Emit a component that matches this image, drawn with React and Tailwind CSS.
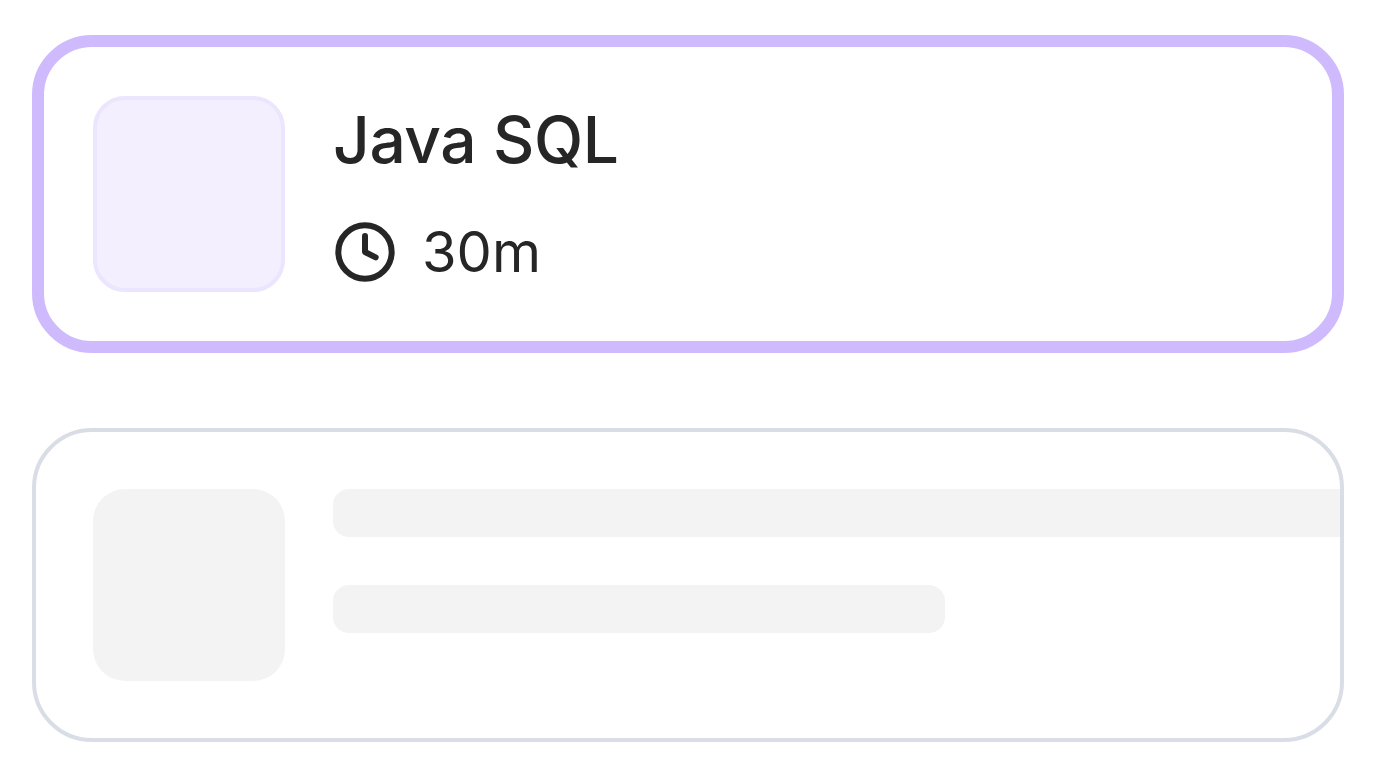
import { Clock } from "lucide-react";

function App() {
  return (
    <div className="min-h-screen bg-white px-8 pt-[35px] font-['Inter',sans-serif] text-[#262626]">
      <div className="flex items-start gap-12 rounded-[60px] border-[12px] border-[#cfbafd] bg-white p-[49px]">
        <div className="h-[196px] w-[192px] shrink-0 rounded-[32px] border-4 border-[#ebe5fe] bg-[#f4effe]" />
        <div className="flex flex-col">
          <h2 className="text-[64px] leading-[88px] font-medium tracking-[-0.4px]">Java SQL</h2>
          <div className="mt-9 flex items-center gap-[25px]">
            <Clock size={64} strokeWidth={2.25} />
            <span className="text-[56px] leading-[64px]">30m</span>
          </div>
        </div>
      </div>

      <div className="mt-[75px] flex items-start gap-12 overflow-hidden rounded-[60px] border-4 border-[#d9dee6] bg-white py-[57px] pl-[57px]">
        <div className="h-[192px] w-[192px] shrink-0 rounded-[32px] bg-[#f3f3f3]" />
        <div className="flex flex-col gap-12">
          <div className="h-12 w-[1100px] rounded-2xl bg-[#f3f3f3]" />
          <div className="h-12 w-[612px] rounded-2xl bg-[#f3f3f3]" />
        </div>
      </div>
    </div>
  );
}

export default App;
